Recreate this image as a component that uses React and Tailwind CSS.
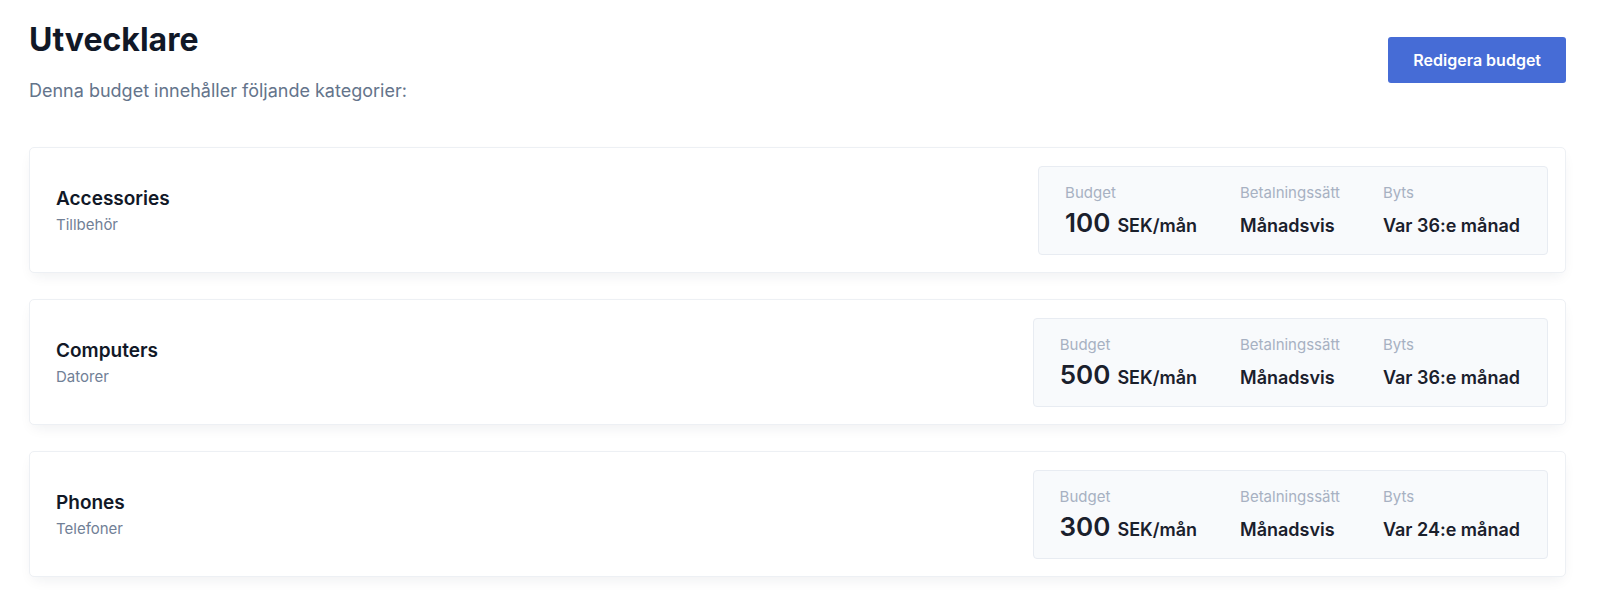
import React from "react";

const categories = [
  { name: "Accessories", sub: "Tillbehör", amount: 100, payment: "Månadsvis", swap: "Var 36:e månad" },
  { name: "Computers", sub: "Datorer", amount: 500, payment: "Månadsvis", swap: "Var 36:e månad" },
  { name: "Phones", sub: "Telefoner", amount: 300, payment: "Månadsvis", swap: "Var 24:e månad" },
];

function Stat({ label, children, big }) {
  return (
    <div className="flex flex-col">
      <span className="text-[15px] leading-[22px] text-[#a7b1c2]">{label}</span>
      {big ? (
        <div className="mt-[3px] flex items-baseline h-[32px] text-[18px] font-semibold text-[#1a202c] whitespace-nowrap">
          {children}
        </div>
      ) : (
        <div className="mt-[3px] h-[32px] pt-[5px] leading-[27px] text-[18px] font-semibold text-[#1a202c] whitespace-nowrap">
          {children}
        </div>
      )}
    </div>
  );
}

function CategoryCard({ cat }) {
  return (
    <div className="flex items-center justify-between h-[126px] bg-white border border-[#edf0f4] rounded-[5px] shadow-[0_6px_14px_-4px_rgba(30,41,59,0.08)] pl-[26px] pr-[17px]">
      <div className="flex flex-col">
        <span className="text-[19px] leading-[27px] font-semibold text-[#111827]">{cat.name}</span>
        <span className="mt-0.5 text-[15px] leading-[22px] text-[#718096]">{cat.sub}</span>
      </div>
      <div className="flex gap-[43px] bg-[#f8fafc] border border-[#e8ecf2] rounded-[4px] pl-[26px] pr-[27px] pt-[15px] pb-[15px]">
        <Stat label="Budget" big>
          <span className="text-[26px] leading-[32px] mr-[7px]">{cat.amount}</span>
          <span>SEK/mån</span>
        </Stat>
        <Stat label="Betalningssätt">{cat.payment}</Stat>
        <Stat label="Byts">{cat.swap}</Stat>
      </div>
    </div>
  );
}

export default function App() {
  return (
    <div className="min-h-screen bg-white pl-[29px] pr-[34px] pt-[20px] pb-8" style={{ fontFamily: "Inter, 'Noto Sans', sans-serif" }}>
      <div className="flex items-start justify-between">
        <div>
          <h1 className="text-[32px] leading-[40px] font-bold text-[#111827]">Utvecklare</h1>
          <p className="mt-[17px] text-[18px] leading-[28px] text-[#64748b]">
            Denna budget innehåller följande kategorier:
          </p>
        </div>
        <button
          type="button"
          className="mt-[17px] h-[46px] px-[25px] rounded-[3px] bg-[#466cd6] text-white text-[16px] font-semibold"
        >
          Redigera budget
        </button>
      </div>

      <div className="mt-[42px] flex flex-col gap-[26px]">
        {categories.map((cat) => (
          <CategoryCard key={cat.name} cat={cat} />
        ))}
      </div>
    </div>
  );
}
